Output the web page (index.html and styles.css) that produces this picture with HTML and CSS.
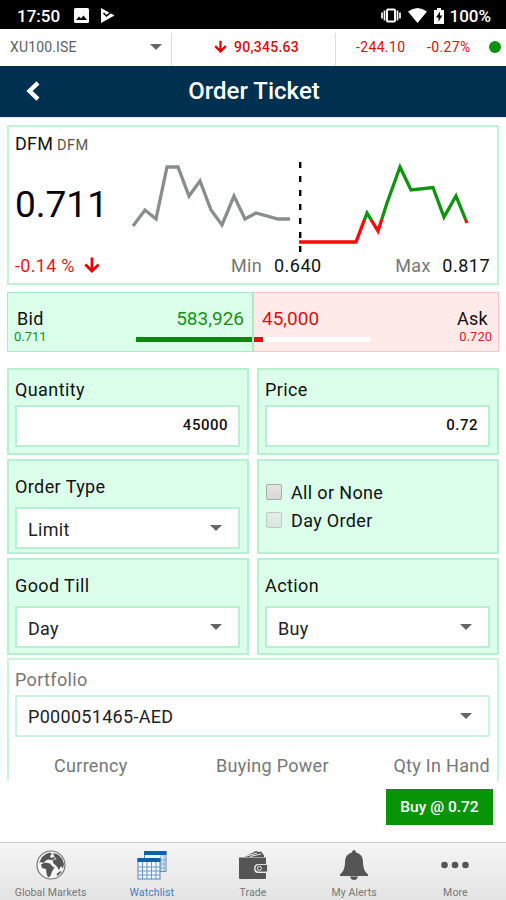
FILE: index.html
```
<!DOCTYPE html>
<html lang="en">
<head>
    <meta charset="UTF-8">
    <meta name="viewport" content="width=device-width, initial-scale=1.0">
    <title>Order Ticket</title>
    <link rel="stylesheet" href="styles.css">
</head>
<body>
    <div class="status-bar">
        <span class="status-time">17:50</span>
        <svg class="status-image" width="15" height="15" viewBox="0 0 15 15">
            <path fill="#fff" fill-rule="evenodd" d="M1.500 0h12Q15 0 15 1.500v12Q15 15 13.500 15h-12Q0 15 0 13.500v-12Q0 0 1.500 0zM2 12h11L9.500 7.500 7 10.500 5 8.500z"/>
        </svg>
        <svg class="status-play" width="14" height="15" viewBox="0 0 14 15">
            <path fill="#fff" d="M0 0l13.500 7.500L0 15z"/>
            <path fill="none" stroke="#000" stroke-width="1.600" d="M2.500 5l3 3 8-7"/>
        </svg>
        <span class="status-right">
            <svg width="20" height="15" viewBox="0 0 20 15">
                <rect x="6" y="1.500" width="8" height="12" rx="1" fill="none" stroke="#fff" stroke-width="2"/>
                <path stroke="#fff" stroke-width="1.700" d="M3.500 2.500v10M1 4.500v6M16.500 2.500v10M19 4.500v6"/>
            </svg>
            <svg class="status-wifi" width="19" height="15" viewBox="0 0 19 15">
                <path fill="#fff" d="M0 3.500Q9.500-3.500 19 3.500L9.500 15z"/>
            </svg>
            <svg class="status-battery" width="10" height="16" viewBox="0 0 10 16">
                <path fill="#fff" d="M3 0h4v2h3v14H0V2h3z"/>
                <path fill="#000" d="M6 3.500L2 9.500h2.500v4l4-6H6z"/>
            </svg>
            <span class="status-percent">100%</span>
        </span>
    </div>

    <div class="ticker">
        <div class="ticker-symbol"><span>XU100.ISE</span><i class="caret"></i></div>
        <div class="ticker-price">
            <svg width="13" height="13" viewBox="0 0 16 16"><path fill="none" stroke="#e80000" stroke-width="2.800" d="M8 1v13M1.500 7.500L8 14l6.500-6.500"/></svg>
            <span>90,345.63</span>
        </div>
        <div class="ticker-change">
            <span class="change-value">-244.10</span>
            <span class="change-percent">-0.27%</span>
            <i class="dot"></i>
        </div>
    </div>

    <header class="title-bar">
        <svg width="14" height="20" viewBox="0 0 14 20"><path fill="none" stroke="#fff" stroke-width="4.400" d="M12 1.800L3.500 10l8.500 8.200"/></svg>
        <h1>Order Ticket</h1>
    </header>

    <main class="ticket">
        <section class="quote">
            <div class="quote-name">DFM<span>DFM</span></div>
            <div class="quote-body">
                <div class="quote-price">0.711</div>
                <svg class="chart" width="340" height="93" viewBox="130 160 340 93">
                    <defs>
                        <!-- green above the previous close, red below -->
                        <linearGradient id="close" gradientUnits="userSpaceOnUse" x1="0" y1="160" x2="0" y2="253">
                            <stop offset="0.645" stop-color="#109410"/>
                            <stop offset="0.645" stop-color="#ff0808"/>
                        </linearGradient>
                    </defs>
                    <polyline fill="none" stroke="#8a8d8d" stroke-width="3.300" points="133,226 145,210 156,219 167,167 178,167 189,196 200,181 211,210 222,225 234,196 245,219 256,213 278,219 290,219"/>
                    <path stroke="#000" stroke-width="2.400" stroke-dasharray="6 8" d="M300.200 162v90"/>
                    <polyline fill="none" stroke="url(#close)" stroke-width="3.300" points="299,242 356,242 367,213 378,231 387,203 400,167 411,190 433,187.500 444,217 456,196 467,223"/>
                </svg>
            </div>
            <div class="quote-foot">
                <span class="quote-change">-0.14 %</span>
                <svg width="16" height="16" viewBox="0 0 16 16"><path fill="none" stroke="#e80000" stroke-width="2.800" d="M8 .5v13.500M1.300 7.500L8 14l6.700-6.500"/></svg>
                <span class="min-label">Min</span><span class="range-value">0.640</span>
                <span class="max-label">Max</span><span class="range-value">0.817</span>
            </div>
        </section>

        <section class="depth">
            <div class="bid">
                <div class="depth-side"><b>Bid</b><small>0.711</small></div>
                <div class="depth-size">
                    <span>583,926</span>
                    <div class="bar"><div class="bar-fill" style="width: 100%"></div></div>
                </div>
            </div>
            <div class="ask">
                <div class="depth-size">
                    <span>45,000</span>
                    <div class="bar"><div class="bar-fill" style="width: 7.700%"></div></div>
                </div>
                <div class="depth-side"><b>Ask</b><small>0.720</small></div>
            </div>
        </section>

        <section class="fields">
            <div class="field">
                <label>Quantity</label>
                <div class="input">45000</div>
            </div>
            <div class="field">
                <label>Price</label>
                <div class="input">0.72</div>
            </div>
            <div class="field tall">
                <label>Order Type</label>
                <div class="select"><span>Limit</span><i class="caret"></i></div>
            </div>
            <div class="field checks">
                <div class="check"><i class="box"></i>All or None</div>
                <div class="check"><i class="box disabled"></i>Day Order</div>
            </div>
            <div class="field tall">
                <label>Good Till</label>
                <div class="select"><span>Day</span><i class="caret"></i></div>
            </div>
            <div class="field tall">
                <label>Action</label>
                <div class="select"><span>Buy</span><i class="caret"></i></div>
            </div>
        </section>

        <section class="portfolio">
            <label>Portfolio</label>
            <div class="select account"><span>P000051465-AED</span><i class="caret"></i></div>
            <div class="portfolio-head">
                <span class="col-currency">Currency</span>
                <span class="col-power">Buying Power</span>
                <span class="col-qty">Qty In Hand</span>
            </div>
        </section>
    </main>

    <div class="actions">
        <div class="buy-button"><span>Buy @ 0.72</span></div>
    </div>

    <nav class="tabs">
        <div class="tab">
            <svg width="30" height="30" viewBox="0 0 30 30">
                <circle cx="15" cy="15" r="14" fill="#f6f6f6" stroke="#777" stroke-width="1.200"/>
                <path fill="#555" d="M6 7l4-3 4-1.500 2 1.500-2 2 1 2 3-1 1 2-3 1-4-.5-2 1-3 2.500-2-1-2 1z"/>
                <path fill="#555" d="M5 14.500l4-2 5 1 2.500 3 2 1-2.500 4-1.500 4.500-2.500 1.500-1.500-4-.5-4.500-4-1z"/>
                <path fill="#555" d="M17 3l5 1.500 4 4L28 14l-1 4.500-2-2.500-2 4-2.500-4-3-2.500-1-3 4-1.500-2-2z"/>
                <path fill="#555" d="M20.500 24l4-3 1 1-4 4z"/>
            </svg>
            <span>Global Markets</span>
        </div>
        <div class="tab active">
            <svg width="30" height="30" viewBox="0 0 30 30">
                <rect x="7.500" y="1.500" width="21.500" height="20" fill="#eef4fa" stroke="#5e91c1"/>
                <path fill="#0c62aa" d="M7 1h22.500v4H7z"/>
                <path fill="none" stroke="#7fa9d1" d="M24 5v16M27 5v16M24 10h5M24 14h5M24 18h5"/>
                <rect x="1" y="8.500" width="22" height="20.500" fill="#f3f8fc" stroke="#4d85bb"/>
                <path fill="#0c62aa" d="M.5 8h23v4H.5z"/>
                <path fill="none" stroke="#6b9bc9" d="M5.500 12v17M10 12v17M14.500 12v17M19 12v17M1 17h22M1 21h22M1 25h22"/>
            </svg>
            <span>Watchlist</span>
        </div>
        <div class="tab">
            <svg width="30" height="30" viewBox="0 0 30 30">
                <path fill="#555" d="M6 7L18 1l3 1 2-.5 3 4V7z"/>
                <path stroke="#eee" d="M7 6.500L19 3M12 6.500l11-2.500"/>
                <path fill="#555" d="M1 7.500h26q1 0 1 1V14h-8q-4 0-4 4.500t4 4.500h8v5q0 1-1 1H2q-1 0-1-1z"/>
                <path fill="#555" stroke="#eee" stroke-width=".8" d="M20 14.500h9.500v7.500H20q-3-1-3-3.700t3-3.800z"/>
                <circle cx="21.500" cy="18.300" r="2" fill="#555" stroke="#eee"/>
            </svg>
            <span>Trade</span>
        </div>
        <div class="tab">
            <svg width="30" height="30" viewBox="0 0 30 30">
                <path fill="#555" d="M15 0q2 0 2 2.500 7 1.500 7 10 0 8 5 12v1.500H1v-1.500q5-4 5-12 0-8.500 7-10Q13 0 15 0zM11 26.500h8q-1 3.500-4 3.500t-4-3.500z"/>
            </svg>
            <span>My Alerts</span>
        </div>
        <div class="tab">
            <svg width="30" height="30" viewBox="0 0 30 30">
                <g fill="#555"><circle cx="4.500" cy="15" r="3.300"/><circle cx="15" cy="15" r="3.300"/><circle cx="25.500" cy="15" r="3.300"/></g>
            </svg>
            <span>More</span>
        </div>
    </nav>
</body>
</html>
```
FILE: styles.css
```
* {
    box-sizing: border-box;
}

body {
    margin: 0;
    width: 506px;
    height: 900px;
    overflow: hidden;
    display: flex;
    flex-direction: column;
    background: #fff;
    color: #111;
    font-family: Roboto, "Liberation Sans", sans-serif;
    font-size: 18px;
}

svg {
    display: block;
    flex: none;
}

.caret {
    flex: none;
    border: 6px solid transparent;
    border-top-color: #666;
    border-bottom: 0;
}

/* phone status bar */
.status-bar {
    height: 29px;
    flex: none;
    display: flex;
    align-items: center;
    padding: 2px 15px 0 17px;
    background: #000;
    color: #fff;
    font-weight: 500;
    font-size: 17px;
}

.status-time {
    width: 57px;
}

.status-play {
    margin-left: 12px;
}

.status-right {
    margin-left: auto;
    display: flex;
    align-items: center;
}

.status-wifi {
    margin-left: 7px;
}

.status-battery {
    margin: 0 5px 0 7px;
}

/* index ticker */
.ticker {
    height: 37px;
    flex: none;
    display: flex;
    padding-top: 4px;
    font-size: 14px;
    color: #e00c0c;
}

.ticker > div {
    display: flex;
    align-items: center;
    padding-bottom: 6px;
}

.ticker > .ticker-symbol {
    width: 172px;
    justify-content: space-between;
    padding: 0 9px 6px 10px;
    letter-spacing: 0.150px;
    color: #606060;
    border-right: 1px solid #ddd;
}

.ticker-price {
    width: 164px;
    padding-left: 42px;
    gap: 7px;
    font-weight: 500;
    letter-spacing: 0.250px;
    border-right: 1px solid #ddd;
}

.ticker-change {
    flex: 1;
    padding-left: 20px;
    letter-spacing: 0.350px;
}

.change-value {
    width: 71px;
}

.change-percent {
    width: 62px;
}

.dot {
    width: 12px;
    height: 12px;
    border-radius: 50%;
    background: #0a930a;
}

/* title bar */
.title-bar {
    height: 51px;
    flex: none;
    display: flex;
    align-items: center;
    padding: 0 26px 1px;
    background: #00304f;
    border-bottom: 1px solid #12304c;
    color: #fff;
}

.title-bar h1 {
    flex: 1;
    margin: 0 12px 0 0;
    text-align: center;
    font-size: 24px;
    font-weight: 500;
}

/* order ticket */
.ticket {
    height: 664px;
    flex: none;
    overflow: hidden;
    padding: 7px 7px 0;
    border-top: 1px solid #d9dfe5;
}

.quote {
    height: 160px;
    padding: 7px 7px 0 6px;
    border: 2px solid #c0f5d3;
}

.quote-name {
    height: 20px;
    line-height: 20px;
    font-size: 18px;
    letter-spacing: 0.200px;
}

.quote-name span {
    margin-left: 4px;
    font-size: 14.500px;
    letter-spacing: 0.400px;
    color: #555;
}

.quote-body {
    display: flex;
    padding-top: 6px;
}

.quote-price {
    width: 115px;
    padding-top: 20px;
    font-size: 37px;
    line-height: 50px;
    color: #000;
}

.quote-foot {
    height: 24px;
    display: flex;
    align-items: center;
    color: #777;
}

.quote-change {
    width: 69px;
    letter-spacing: 0.300px;
    color: #e51a1a;
}

.min-label {
    width: 43px;
    margin-left: 131px;
    letter-spacing: 0.300px;
}

.range-value {
    letter-spacing: 0.500px;
    color: #111;
}

.max-label {
    width: 47px;
    margin-left: auto;
    letter-spacing: 0.300px;
}

.depth {
    display: flex;
    height: 60px;
    margin-top: 7px;
}

.bid,
.ask {
    width: 246px;
    display: flex;
    justify-content: space-between;
    border: 1px solid #ade8c8;
    background: #dbffea;
    padding-top: 13px;
}

.ask {
    background: #ffeaea;
    border-color: #f8c5c5;
}

.depth-side {
    padding: 0 10px 0 6px;
}

.depth-side b {
    display: block;
    padding-left: 3px;
    font-weight: 400;
    line-height: 25px;
    letter-spacing: 0.300px;
}

.depth-side small {
    display: block;
    font-size: 13px;
    line-height: 11px;
    color: #159415;
}

.ask .depth-side {
    padding: 0 6px 0 0;
    text-align: right;
}

.ask .depth-side b {
    padding-right: 4px;
}

.ask small {
    color: #dd2222;
}

.depth-size {
    width: 116px;
    line-height: 25px;
    font-size: 19px;
    text-align: right;
    color: #159415;
}

.depth-size span {
    padding: 0 8px;
}

.ask .depth-size {
    text-align: left;
    color: #dd1111;
}

.bar {
    height: 5px;
    margin-top: 6px;
    background: #fff;
}

.bar-fill {
    height: 5px;
    background: #078c07;
}

.ask .bar-fill {
    background: #dd1111;
}

.fields {
    display: grid;
    grid-template-columns: 242px 242px;
    grid-template-rows: 87px 95px 97px;
    gap: 4px 8px;
    margin-top: 16px;
}

.field {
    border: 2px solid #b7f1d1;
    background: #dbffea;
    padding: 9px 7px 0 6px;
}

.field label {
    display: block;
    height: 26px;
    line-height: 22px;
    letter-spacing: 0.400px;
}

.field.tall {
    padding-top: 15px;
}

.field.tall label {
    height: 31px;
}

.input,
.select {
    height: 42px;
    display: flex;
    align-items: center;
    border: 2px solid #b7f1d1;
    background: #fff;
}

.input {
    justify-content: flex-end;
    padding: 0 10px 3px 0;
    font-size: 15px;
    font-weight: 500;
    letter-spacing: 0.500px;
}

.select {
    justify-content: space-between;
    padding: 3px 16px 0 11px;
    letter-spacing: 0.300px;
    color: #222;
}

.select .caret {
    margin-bottom: 4px;
}

.field.checks {
    padding-top: 17px;
}

.check {
    display: flex;
    align-items: center;
    height: 28px;
    letter-spacing: 0.350px;
}

.box {
    width: 16px;
    height: 16px;
    margin: 0 9px 0 1px;
    border: 1px solid #aaa;
    border-radius: 2px;
    background: linear-gradient(#e8e4e4, #d8d6d6);
}

.box.disabled {
    opacity: 0.6;
}

.portfolio {
    height: 160px;
    margin-top: 3px;
    padding: 9px 7px 0 6px;
    border: 2px solid #c9f7da;
    color: #777;
}

.portfolio label {
    display: block;
    height: 26px;
    line-height: 22px;
    letter-spacing: 0.350px;
}

.account {
    padding-top: 1px;
    border-color: #c9f7da;
}

.account .caret {
    margin-bottom: 2px;
}

.portfolio-head {
    display: flex;
    padding: 18px 0 0 39px;
    line-height: 22px;
    letter-spacing: 0.300px;
}

.col-currency {
    width: 162px;
}

.col-qty {
    margin-left: auto;
}

.actions {
    flex: 1;
    display: flex;
    justify-content: flex-end;
    padding: 8px 13px 0 0;
}

.buy-button {
    width: 107px;
    height: 36px;
    line-height: 36px;
    text-align: center;
    background: #079507;
    color: #fff;
    font-size: 15.500px;
    font-weight: 500;
}

/* bottom tabs */
.tabs {
    height: 58px;
    flex: none;
    display: flex;
    border-top: 1px solid #ccc;
    background: linear-gradient(#f5f5f5, #e3e3e3);
}

.tab {
    flex: 1;
    display: flex;
    flex-direction: column;
    align-items: center;
    padding-top: 7px;
    gap: 6px;
    font-size: 10.500px;
    line-height: 13px;
    letter-spacing: 0.100px;
    color: #777;
}

.tab.active {
    color: #3583c4;
}
```
